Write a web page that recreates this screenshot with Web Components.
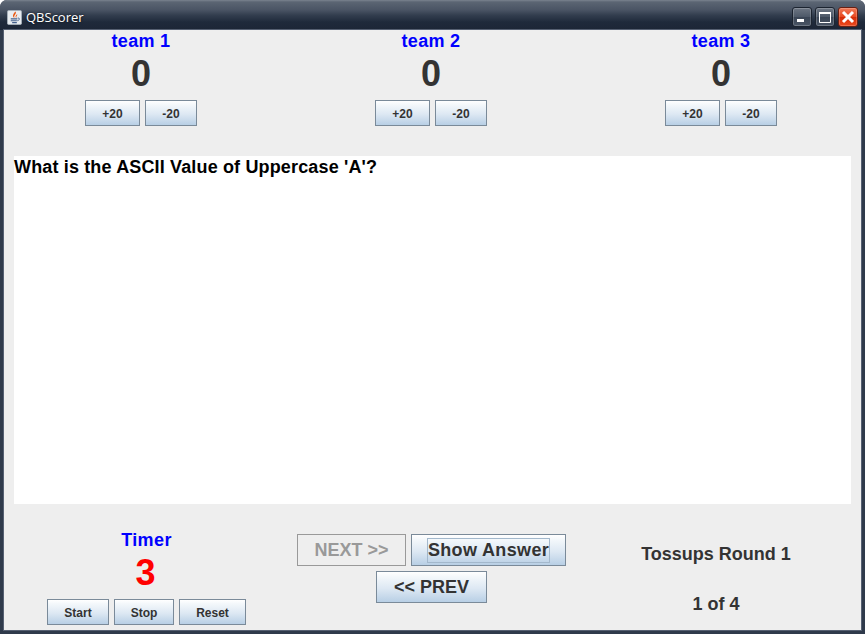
<!DOCTYPE html>
<html>
<head>
<meta charset="utf-8">
<title>QBScorer</title>
<style>
  html, body { margin: 0; padding: 0; background: #fff; }
  body { font-family: "Liberation Sans", Arial, sans-serif; }
</style>
</head>
<body>

<qb-window>
  <qb-scores>
    <qb-team name="team 1" score="0"></qb-team>
    <qb-team name="team 2" score="0"></qb-team>
    <qb-team name="team 3" score="0"></qb-team>
  </qb-scores>
  <qb-question>What is the ASCII Value of Uppercase 'A'?</qb-question>
  <qb-footer>
    <qb-timer slot="left" value="3"></qb-timer>
    <qb-nav slot="center"></qb-nav>
    <qb-round slot="right"></qb-round>
  </qb-footer>
</qb-window>

<template id="win-temp">
  <style>
    :host {
      display: flex;
      flex-direction: column;
      width: 865px;
      height: 634px;
      box-sizing: border-box;
      background: #2f3a4b;
      border-radius: 7px 7px 0 0;
      overflow: hidden;
    }
    #bar {
      flex: none;
      height: 30px;
      display: flex;
      align-items: center;
      gap: 4px;
      padding: 4px 7px 0 7px;
      box-sizing: border-box;
      background: linear-gradient(#7a838f 0, #5b6573 2px, #4a5464 10px, #333e4f 15px, #1f2a3b 22px, #1c2636 30px);
      color: #fff;
      font: 13px "Open Sans", "DejaVu Sans", sans-serif;
      text-shadow: 0 0 3px rgba(0, 0, 0, 0.8);
    }
    #title { flex: 1; }
    #btns { display: flex; gap: 3px; margin-top: -1px; }
    .wb {
      width: 20px;
      height: 20px;
      box-sizing: border-box;
      border: 1px solid #1c2430;
      border-radius: 3px;
      box-shadow: inset 0 0 0 1px rgba(255, 255, 255, 0.2);
      background: linear-gradient(#6d7683, #4d5868 50%, #3a4555 50%, #4a5565);
      display: block;
    }
    .wb.close {
      border-color: #6a2012;
      background: linear-gradient(#f07a58, #e8481f 50%, #d42c08 50%, #ec4a1e);
    }
    .wb svg { display: block; }
    #body {
      flex: 1;
      margin: 0 4px 4px 4px;
      background: #eeeeee;
      display: flex;
      flex-direction: column;
      box-shadow: 0 0 0 1px #566072;
      min-height: 0;
    }
  </style>
  <div id="bar">
    <svg width="15" height="15" viewBox="0 0 16 16">
      <rect x="0.5" y="0.5" width="15" height="15" rx="1.5" fill="#e8ecf0" stroke="#a5b0ba"/>
      <path d="M9 1.5 C11 4 6.5 5 8 8.5 C5.5 7 6 4.5 9 1.5Z M11 4.5 C11 6 9.5 6.5 10 8.5 C8.5 7.5 9 5.5 11 4.5Z" fill="#ea5a14"/>
      <path d="M4 9.5h7M4 11.5h6.5M5.5 13.5h5" stroke="#44608c" stroke-width="1.2" fill="none"/>
      <path d="M11.5 8.5c2.5 0 2.5 2 -0.5 3" stroke="#44608c" stroke-width="1" fill="none"/>
    </svg>
    <span id="title">QBScorer</span>
    <div id="btns">
      <div class="wb"><svg width="18" height="18" viewBox="0 0 18 18"><rect x="4" y="11" width="7" height="3" fill="#fff"/></svg></div>
      <div class="wb"><svg width="18" height="18" viewBox="0 0 18 18"><path d="M3.5 4.5h11v10h-11z" fill="none" stroke="#fff"/><rect x="3" y="4" width="12" height="2" fill="#fff"/></svg></div>
      <div class="wb close"><svg width="18" height="18" viewBox="0 0 18 18"><path d="M4 4l10 10M14 4L4 14" stroke="#fff" stroke-width="3"/></svg></div>
    </div>
  </div>
  <div id="body"><slot></slot></div>
</template>

<template id="btn-temp">
  <style>
    :host {
      display: inline-flex;
      align-items: center;
      justify-content: center;
      box-sizing: border-box;
      height: 26px;
      width: var(--w, 60px);
      border: 1px solid #7a8a99;
      background: linear-gradient(#ffffff 0, #f4f8fb 15%, #dde8f3 55%, #b8cfe5 100%);
      color: #333333;
      font: bold 12px "Liberation Sans", Arial, sans-serif;
      white-space: nowrap;
      padding-top: 1px;
    }
    :host([big]) { height: 32px; font-size: 18px; padding-top: 0; }
    :host([disabled]) { background: #eeeeee; border-color: #999999; color: #999999; }
    :host([focused]) span {
      outline: 1px solid #a3b8cc;
      outline-offset: 0;
      padding: 2px 0;
      line-height: 19px;
      letter-spacing: 0.35px;
    }
  </style>
  <span><slot></slot></span>
</template>

<template id="team-temp">
  <style>
    :host {
      display: flex;
      flex-direction: column;
      align-items: center;
      font-family: "Liberation Sans", Arial, sans-serif;
      font-weight: bold;
    }
    #name { color: #0000ff; font-size: 18px; line-height: 21px; height: 21px; margin-top: 1px; letter-spacing: 0.3px; }
    #score { color: #333333; font-size: 36px; line-height: 41px; height: 41px; margin-top: 1px; }
    #row { display: flex; gap: 5px; margin-top: 6px; }
  </style>
  <div id="name"></div>
  <div id="score"></div>
  <div id="row">
    <qb-button style="--w:55px">+20</qb-button>
    <qb-button style="--w:52px">-20</qb-button>
  </div>
</template>

<template id="footer-temp">
  <style>
    :host { display: flex; flex: 1; align-items: flex-start; padding-left: 43px; }
    #l { width: 199px; margin-top: 25px; }
    #c { width: 269px; margin-left: 51px; margin-top: 30px; }
    #r { width: 150px; margin-left: 75px; margin-top: 40px; }
  </style>
  <div id="l"><slot name="left"></slot></div>
  <div id="c"><slot name="center"></slot></div>
  <div id="r"><slot name="right"></slot></div>
</template>

<script>
  class QbWindow extends HTMLElement {
    constructor() {
      super();
      this._root = this.attachShadow({ mode: 'open' });
      this._root.appendChild(document.querySelector('#win-temp').content.cloneNode(true));
    }
  }

  class QbButton extends HTMLElement {
    constructor() {
      super();
      this._root = this.attachShadow({ mode: 'open' });
      this._root.appendChild(document.querySelector('#btn-temp').content.cloneNode(true));
    }
  }

  class QbTeam extends HTMLElement {
    constructor() {
      super();
      this._root = this.attachShadow({ mode: 'open' });
      this._root.appendChild(document.querySelector('#team-temp').content.cloneNode(true));
    }
    connectedCallback() {
      this._root.querySelector('#name').textContent = this.getAttribute('name');
      this._root.querySelector('#score').textContent = this.getAttribute('score');
    }
  }

  class QbScores extends HTMLElement {
    constructor() {
      super();
      this._root = this.attachShadow({ mode: 'open' });
      this._root.innerHTML = `<style>
        :host {
          display: grid;
          flex: none;
          grid-template-columns: repeat(3, 210px);
          column-gap: 80px;
          padding: 0 0 0 32px;
          height: 126px;
          align-content: start;
        }
      </style><slot></slot>`;
    }
  }

  class QbQuestion extends HTMLElement {
    constructor() {
      super();
      this._root = this.attachShadow({ mode: 'open' });
      this._root.innerHTML = `<style>
        :host {
          display: block;
          flex: none;
          height: 348px;
          margin: 0 10px;
          background: #fff;
          color: #000;
          font: bold 18px/22px "Liberation Sans", Arial, sans-serif;
          letter-spacing: 0.15px;
        }
      </style><slot></slot>`;
    }
  }

  class QbFooter extends HTMLElement {
    constructor() {
      super();
      this._root = this.attachShadow({ mode: 'open' });
      this._root.appendChild(document.querySelector('#footer-temp').content.cloneNode(true));
    }
  }

  class QbTimer extends HTMLElement {
    constructor() {
      super();
      this._root = this.attachShadow({ mode: 'open' });
      this._root.innerHTML = `<style>
        :host { display: flex; flex-direction: column; align-items: center; font: bold 18px "Liberation Sans", Arial, sans-serif; }
        #t { color: #0000ff; line-height: 22px; height: 22px; letter-spacing: 0.4px; }
        #v { color: #ff0000; font-size: 36px; line-height: 41px; height: 41px; margin-top: 1px; margin-right: 2px; }
        #row { display: flex; gap: 5px; margin-top: 6px; }
      </style>
      <div id="t">Timer</div>
      <div id="v">${this.getAttribute('value')}</div>
      <div id="row">
        <qb-button style="--w:62px">Start</qb-button>
        <qb-button style="--w:60px">Stop</qb-button>
        <qb-button style="--w:67px">Reset</qb-button>
      </div>`;
    }
  }

  class QbNav extends HTMLElement {
    constructor() {
      super();
      this._root = this.attachShadow({ mode: 'open' });
      this._root.innerHTML = `<style>
        :host { display: flex; flex-direction: column; align-items: center; gap: 5px; }
        #row { display: flex; gap: 5px; }
      </style>
      <div id="row">
        <qb-button big disabled style="--w:109px">NEXT &gt;&gt;</qb-button>
        <qb-button big focused style="--w:155px">Show Answer</qb-button>
      </div>
      <qb-button big style="--w:111px">&lt;&lt; PREV</qb-button>`;
    }
  }

  class QbRound extends HTMLElement {
    constructor() {
      super();
      this._root = this.attachShadow({ mode: 'open' });
      this._root.innerHTML = `<style>
        :host { display: flex; flex-direction: column; align-items: center; gap: 29px; color: #333333; font: bold 18px/21px "Liberation Sans", Arial, sans-serif; white-space: nowrap; }
      </style>
      <div>Tossups Round 1</div>
      <div>1 of 4</div>`;
    }
  }

  customElements.define('qb-window', QbWindow);
  customElements.define('qb-button', QbButton);
  customElements.define('qb-team', QbTeam);
  customElements.define('qb-scores', QbScores);
  customElements.define('qb-question', QbQuestion);
  customElements.define('qb-footer', QbFooter);
  customElements.define('qb-timer', QbTimer);
  customElements.define('qb-nav', QbNav);
  customElements.define('qb-round', QbRound);
</script>
</body>
</html>
